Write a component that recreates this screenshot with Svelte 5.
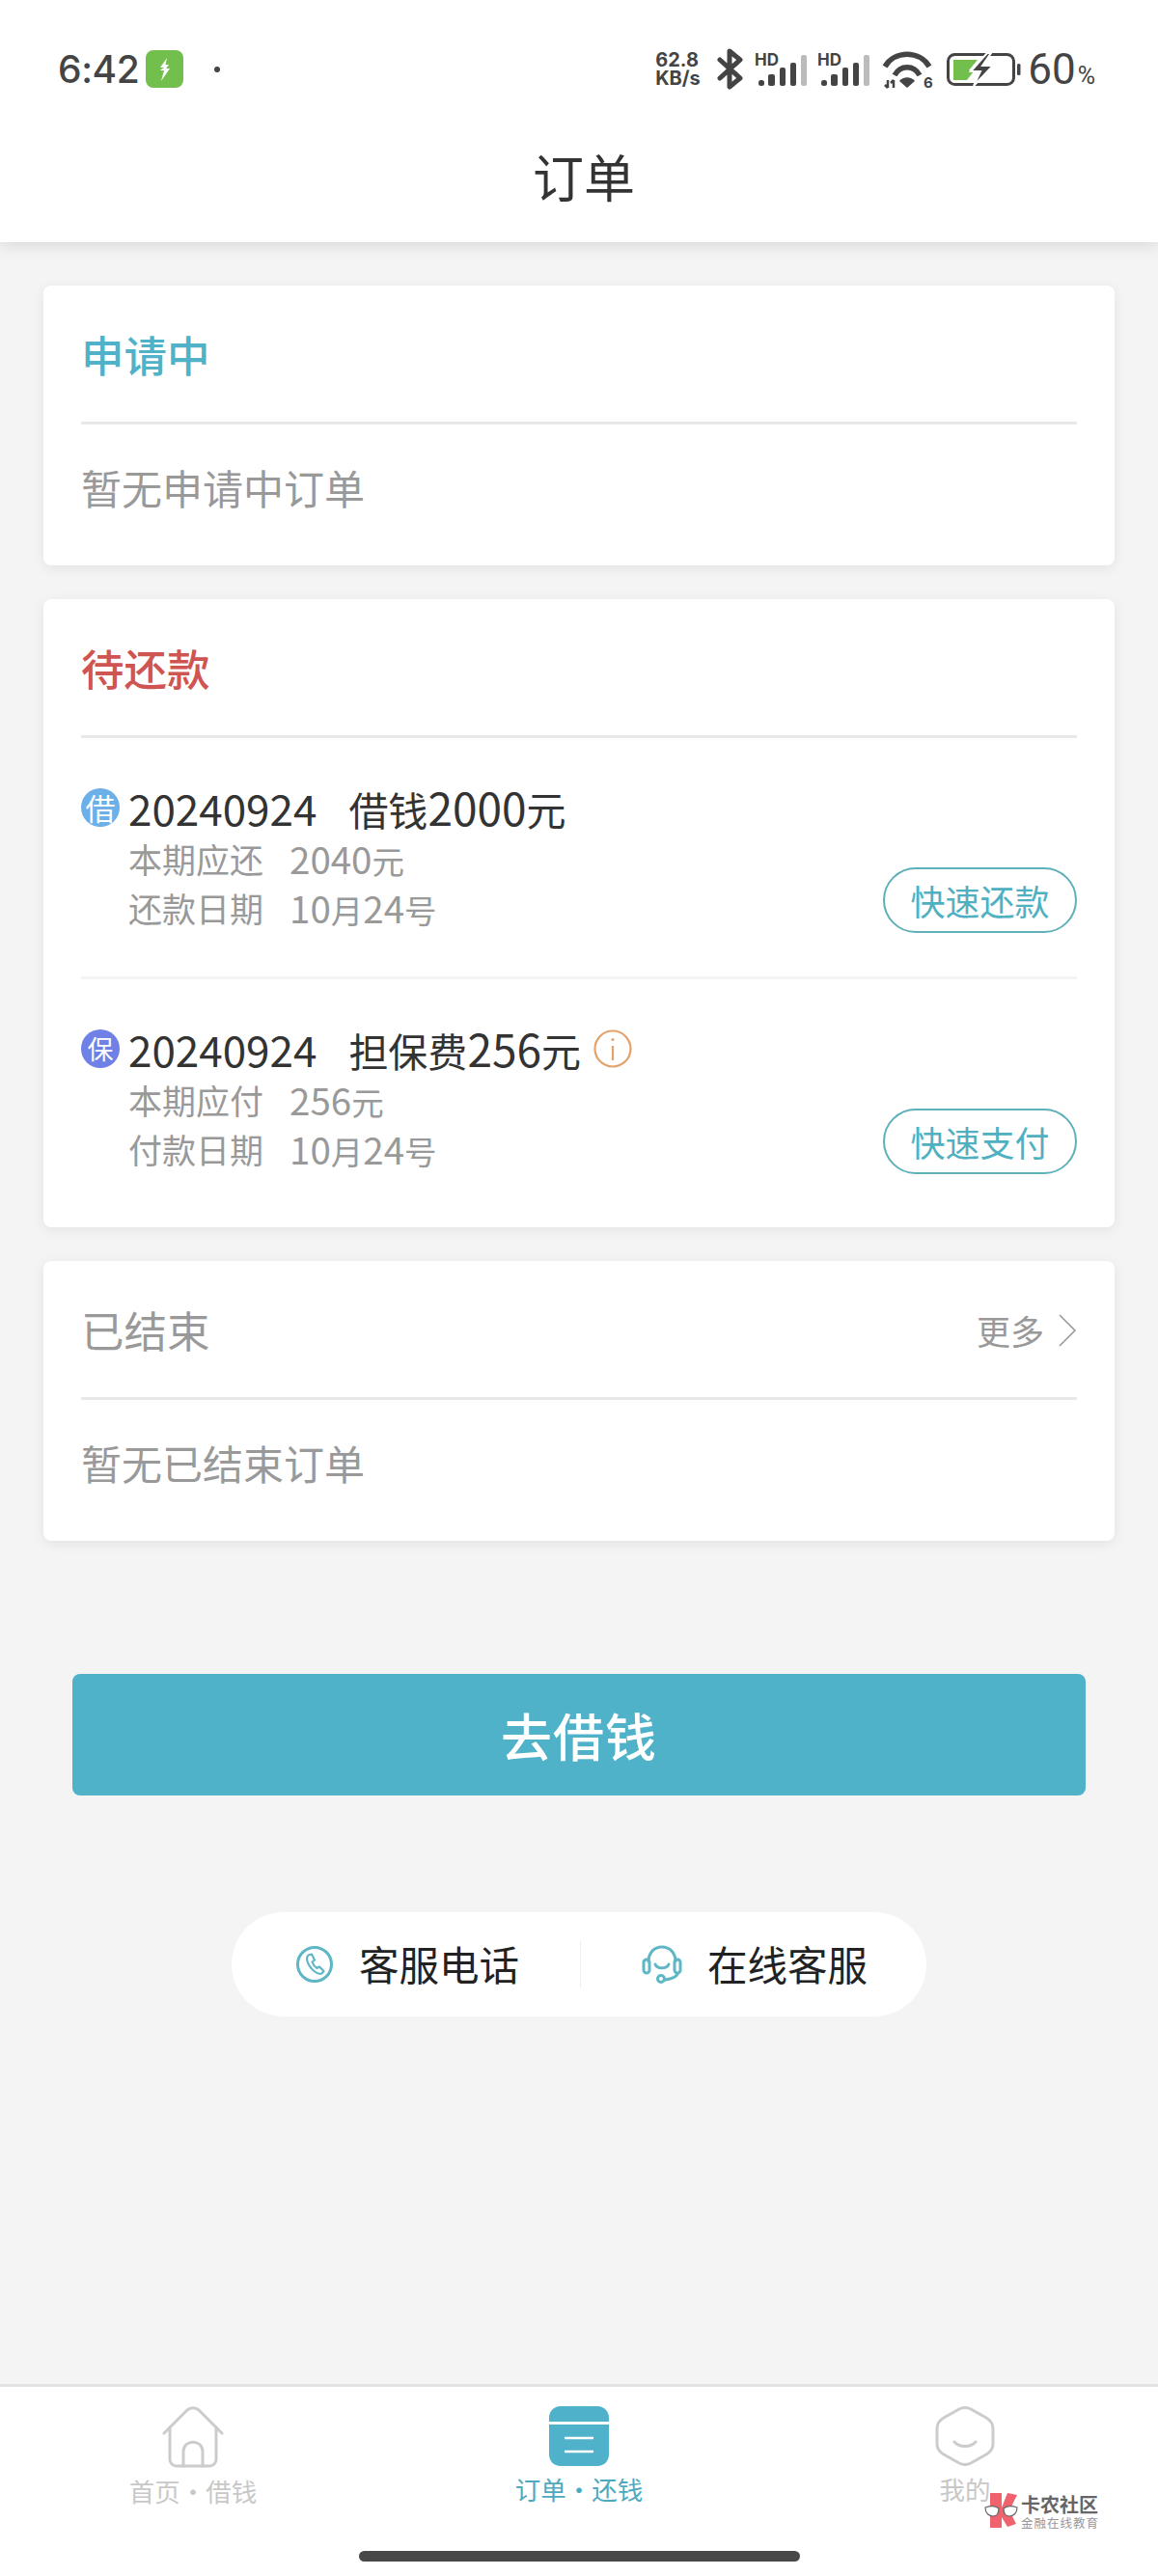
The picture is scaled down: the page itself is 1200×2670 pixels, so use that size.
<script>
  const orders = [
    {
      badge: '借', badgeClass: 'blue', no: '20240924', title: '借钱2000元', info: false,
      lines: [['本期应还', '2040元'], ['还款日期', '10月24号']], action: '快速还款'
    },
    {
      badge: '保', badgeClass: 'purple', no: '20240924', title: '担保费256元', info: true,
      lines: [['本期应付', '256元'], ['付款日期', '10月24号']], action: '快速支付'
    }
  ]
  const signals = [0, 1]

  // digits are set a bit larger than the CJK around them
  const parts = (s) => s.match(/\d+|\D+/g)
  const isNum = (p) => /^\d/.test(p)
</script>

<div class="page">
  <header class="head">
    <div class="status">
      <div class="st-left">
        <span class="time">6:42</span>
        <span class="st-badge">
          <svg width="16" height="24" viewBox="0 0 16 24"><path d="M10 0 3 10h4L4 12l-1 1h4l-3 11 9-13H9l3-4H8.500z" fill="#fff"/></svg>
        </span>
        <span class="st-dot"></span>
      </div>
      <div class="st-right">
        <span class="speed"><b>62.8</b><b>KB/s</b></span>
        <svg class="bt" width="28" height="43" viewBox="0 0 28 43" fill="none" stroke="#444" stroke-width="5" stroke-linejoin="round" stroke-linecap="round"><path d="M3 12 24 31 13 40V3l11 9L3 31"/></svg>
        {#each signals as s}
          <svg class="sig" width="55" height="40" viewBox="0 -4 55 40">
            <text x="0" y="14" font-size="17" font-weight="700" fill="#444" font-family="Inter, sans-serif">HD</text>
            <rect x="4" y="29" width="6" height="6" rx="2.500" fill="#444"/>
            <rect x="14" y="23" width="7" height="12" rx="2" fill="#444"/>
            <rect x="26" y="16" width="6" height="19" rx="2" fill="#444"/>
            <rect x="37" y="11" width="6" height="24" rx="2" fill="#444"/>
            <rect x="48" y="3" width="6" height="32" rx="2" fill="#bbb"/>
          </svg>
        {/each}
        <svg class="wifi" width="54" height="44" viewBox="0 0 54 44" fill="none" stroke="#444" stroke-width="5.500">
          <path d="M3 17C13 0 39 0 49 17"/>
          <path d="M13 26C19 15 33 15 39 26"/>
          <path d="M26 39l-8-7c4-5 12-5 16 0z" fill="#444" stroke="none"/>
          <path d="M6 31v8M3 36l3 3M12 39v-8M9 34l3-3" stroke-width="2.500"/>
          <text x="43" y="39" font-size="15" font-weight="700" fill="#444" stroke="none" font-family="Inter, sans-serif">6</text>
        </svg>
        <svg class="batt" width="77" height="34" viewBox="0 0 77 34" fill="none">
          <rect x="1.500" y="1.500" width="68" height="31" rx="7" stroke="#444" stroke-width="3"/>
          <path d="M7 7h25l-9 11 5 1-7 9H7z" fill="#73bf4e"/>
          <path d="M42 0 25 19h10l-7 15 20-21H37l9-13z" fill="#444" stroke="#fff" stroke-width="2"/>
          <rect x="73" y="11" width="3.500" height="12" rx="1.500" fill="#444"/>
        </svg>
        <span class="pct">60<small>%</small></span>
      </div>
    </div>
    <h1 class="title">订单</h1>
  </header>

  <main class="main">
    <section class="card">
      <div class="card-head"><h2 class="teal">申请中</h2></div>
      <p class="empty">暂无申请中订单</p>
    </section>

    <section class="card">
      <div class="card-head"><h2 class="red">待还款</h2></div>
      {#each orders as o, i}
        <div class="row" class:last={i === 1}>
          <div class="row-left">
            <div class="row-title">
              <span class="badge {o.badgeClass}">{o.badge}</span>
              <span class="no">{o.no}</span>
              <span class="row-name">{#each parts(o.title) as p}<span class:num={isNum(p)}>{p}</span>{/each}</span>
              {#if o.info}
                <svg class="info" width="40" height="40" viewBox="0 0 40 40" fill="none" stroke="#e2a26a" stroke-width="2.200">
                  <circle cx="20" cy="20" r="18.500"/>
                  <path d="M20 17v15"/>
                  <circle cx="20" cy="10.500" r="1.500" fill="#e2a26a" stroke="none"/>
                </svg>
              {/if}
            </div>
            {#each o.lines as l}
              <div class="sub"><span>{l[0]}</span><span class="val">{#each parts(l[1]) as p}<span class:num={isNum(p)}>{p}</span>{/each}</span></div>
            {/each}
          </div>
          <button class="quick">{o.action}</button>
        </div>
      {/each}
    </section>

    <section class="card">
      <div class="card-head between">
        <h2 class="gray">已结束</h2>
        <span class="more">更多
          <svg width="20" height="36" viewBox="0 0 20 36" fill="none" stroke="#999" stroke-width="1.600"><path d="M2 2l16 16L2 34"/></svg>
        </span>
      </div>
      <p class="empty">暂无已结束订单</p>
    </section>

    <button class="go">去借钱</button>

    <div class="service">
      <div class="svc">
        <svg width="40" height="40" viewBox="0 0 40 40" fill="none" stroke="#5fb7c6" stroke-width="3">
          <circle cx="20" cy="20" r="17.500"/>
          <path d="M13.500 10.500l3.500-1 3 6-2.500 2c1 3 2.500 5 5 6.500l2.500-1.500 4.500 4.500-2 2.500c-2.500 1-5 0-8-2.500-4-3.500-7-8-7.500-12.500 0-1.500.5-3 1.500-4z" stroke-width="2.200" stroke-linejoin="round"/>
        </svg>
        <span>客服电话</span>
      </div>
      <i class="svc-line"></i>
      <div class="svc">
        <svg width="42" height="40" viewBox="0 0 42 40" fill="none" stroke="#5fb7c6" stroke-width="3" stroke-linecap="round">
          <path d="M7 17C7 8 13 2 21 2s14 6 14 15"/>
          <rect x="2" y="15" width="6" height="14" rx="3"/>
          <rect x="34" y="15" width="6" height="14" rx="3"/>
          <path d="M14 20c2 5 12 5 14 0"/>
          <path d="M37 29c0 4-6 6-13 7"/>
          <circle cx="20" cy="35" r="3.500"/>
        </svg>
        <span>在线客服</span>
      </div>
    </div>
  </main>

  <nav class="tabs">
    <div class="tab">
      <svg width="64" height="64" viewBox="0 0 64 64" fill="none" stroke="#ccc" stroke-width="3" stroke-linejoin="round" stroke-linecap="round">
        <path d="M2 28 26 4c3.500-3 8.500-3 12 0l24 24"/>
        <path d="M8 22v33c0 4 3 7 7 7h34c4 0 7-3 7-7V22"/>
        <path d="M22 62V47c0-13 20-13 20 0v15"/>
      </svg>
      <span>首页•借钱</span>
    </div>
    <div class="tab active">
      <svg width="62" height="62" viewBox="0 0 62 62">
        <path d="M12 0h38c7 0 12 5 12 12v4H0v-4C0 5 5 0 12 0zM0 19h62v31c0 7-5 12-12 12H12C5 62 0 57 0 50z" fill="#4fb2ca"/>
        <path d="M16 33h30M16 47h30" stroke="#fff" stroke-width="2.500"/>
      </svg>
      <span>订单•还钱</span>
    </div>
    <div class="tab">
      <svg width="62" height="62" viewBox="0 0 62 62" fill="none" stroke="#ccc" stroke-width="3" stroke-linejoin="round" stroke-linecap="round">
        <path d="M25 3c4-2 8-2 12 0l16 9c5 3 7 6 7 11v16c0 5-2 8-7 11l-16 9c-4 2-8 2-12 0L9 50c-5-3-7-6-7-11V23c0-5 2-8 7-11z"/>
        <path d="M20 37c5 6 17 6 22 0"/>
      </svg>
      <span>我的</span>
    </div>
    <div class="watermark">
      <svg width="36" height="36" viewBox="0 0 36 36">
        <path d="M6 0h12v15l6-15 10 2-8 16 7 14-9 3-6-10v11H6z" fill="#f0626e"/>
        <path d="M1 15c5-2 11-2 14 1 0 5-2 8-6 8s-8-3-8-9zM34 15c-5-2-11-2-14 1 0 5 2 8 6 8s8-3 8-9z" fill="#fff" stroke="#666" stroke-width="1.200"/>
      </svg>
      <div class="wm-text"><b>卡农社区</b><small>金融在线教育</small></div>
    </div>
    <div class="home-bar"></div>
  </nav>
</div>

<style>
  :global(body) { margin: 0; background: #f4f4f4; }
  .page { width: 1200px; height: 2670px; display: flex; flex-direction: column; font-family: "Noto Sans CJK SC", "Noto Sans", sans-serif; background: #f4f4f4; overflow: hidden; }

  .head { background: #fff; height: 251px; box-shadow: 0 3px 16px rgba(0,0,0,.12); flex: none; }
  .status { height: 113px; padding: 30px 65px 0 60px; box-sizing: border-box; display: flex; justify-content: space-between; color: #444; }
  .st-left, .st-right { display: flex; align-items: center; height: 83px; }
  .time { font: 500 39px/1 Inter, sans-serif; letter-spacing: -.4px; width: 91px; }
  .st-badge { width: 39px; height: 39px; border-radius: 8px; background: #73bf4e; display: flex; align-items: center; justify-content: center; }
  .st-dot { width: 6px; height: 6px; background: #444; border-radius: 50%; margin-left: 32px; }
  .speed { display: flex; flex-direction: column; font: 700 20px/19px Inter, sans-serif; width: 52px; white-space: nowrap; }
  .speed b { font-weight: 700; }
  .bt { margin-left: 12px; }
  .sig { margin: -4px 0 0 11px; }
  .sig + .sig { margin-left: 10px; }
  .wifi { margin: 4px 0 0 12px; }
  .batt { margin-left: 13px; }
  .pct { font: 400 44px/1 Roboto, sans-serif; margin-left: 7px; white-space: nowrap; }
  .pct small { font-size: 25px; margin-left: 2px; }
  .title { margin: 0; height: 138px; line-height: 138px; text-align: center; font-size: 53px; font-weight: 400; color: #333; padding-left: 10px; box-sizing: border-box; }

  .main { flex: 1; display: flex; flex-direction: column; padding-top: 45px; }
  .card { margin: 0 45px 35px; padding: 0 39px; background: #fff; border-radius: 8px; box-shadow: 0 3px 14px rgba(0,0,0,.07); }
  .card-head { height: 144px; box-sizing: border-box; display: flex; align-items: center; border-bottom: 3px solid #e8e8e8; }
  .between { justify-content: space-between; }
  h2 { margin: 0; font-size: 44.500px; font-weight: 500; line-height: 56px; }
  .teal { color: #4fb2c8; }
  .red { color: #cf5553; }
  .gray { color: #999; font-weight: 400; }
  .more { display: flex; align-items: center; gap: 14px; font-size: 35px; color: #999; margin-top: 2px; }
  .empty { margin: 0; height: 146px; line-height: 130px; font-size: 42px; color: #999; }

  .row { display: flex; justify-content: space-between; padding: 45px 0 46px; border-bottom: 3px solid #f3f3f3; }
  .row.last { border-bottom: 0; padding: 45px 0 56px; }
  .row-title { height: 54px; display: flex; align-items: center; white-space: nowrap; }
  .badge { width: 40px; height: 40px; border-radius: 50%; color: #fff; font-size: 31px; line-height: 40px; text-align: center; margin-right: 9px; }
  .purple { font-size: 27px; background: #6f80e6; }
  .blue { background: #6bb0e8; }
  .no { font-size: 44px; color: #333; line-height: 54px; margin-right: 33px; }
  .row-name { font-size: 41px; color: #333; line-height: 54px; }
  .row-name .num { font-size: 46px; }
  .info { margin-left: 13px; }
  .sub { display: flex; gap: 27px; padding-left: 49px; font-size: 35px; line-height: 51px; height: 51px; color: #999; }
  .val { font-size: 33.500px; }
  .val .num { font-size: 38.500px; }
  .quick { align-self: flex-end; width: 201px; height: 68px; margin-bottom: -1px; box-sizing: border-box; padding: 0; background: #fff; border: 2px solid #5fb0b8; border-radius: 34px; color: #4fb0c2; font: 400 36px/1 "Noto Sans CJK SC", sans-serif; }

  .go { margin: 103px 75px 0; height: 126px; padding: 0; border: 0; border-radius: 8px; background: #50b2c9; color: #fff; font: 500 53px/1 "Noto Sans CJK SC", sans-serif; letter-spacing: 1px; flex: none; }
  .service { margin: 121px auto 0; width: 720px; height: 108px; background: #fff; border-radius: 54px; display: flex; align-items: center; }
  .svc { flex: 1; display: flex; align-items: center; gap: 26px; padding-left: 66px; font-size: 41.500px; line-height: 54px; color: #222; white-space: nowrap; }
  .svc span { margin-top: -2px; }
  .svc:last-child { padding-left: 63px; }
  .svc-line { width: 1px; height: 48px; background: #eee; flex: none; }

  .tabs { position: relative; height: 199px; flex: none; background: #fff; border-top: 3px solid #e2e2e2; box-sizing: border-box; display: flex; }
  .tab { position: absolute; top: 20px; display: flex; flex-direction: column; align-items: center; gap: 5px; width: 200px; font-size: 26.500px; line-height: 38px; color: #c8c8c8; white-space: nowrap; }
  .tab:nth-child(1) { left: 100px; }
  .tab:nth-child(2) { left: 500px; }
  .tab:nth-child(3) { left: 900px; }
  .tab svg { display: block; }
  .active { color: #4fa9be; }
  .watermark { position: absolute; left: 1020px; top: 110px; display: flex; gap: 2px; }
  .wm-text { display: flex; flex-direction: column; }
  .wm-text b { font-size: 20px; line-height: 24px; color: #666; }
  .wm-text small { font-size: 12.500px; line-height: 14px; color: #999; letter-spacing: 1px; white-space: nowrap; }
  .home-bar { position: absolute; left: 372px; top: 170px; width: 457px; height: 11px; border-radius: 6px; background: #484848; }
</style>
